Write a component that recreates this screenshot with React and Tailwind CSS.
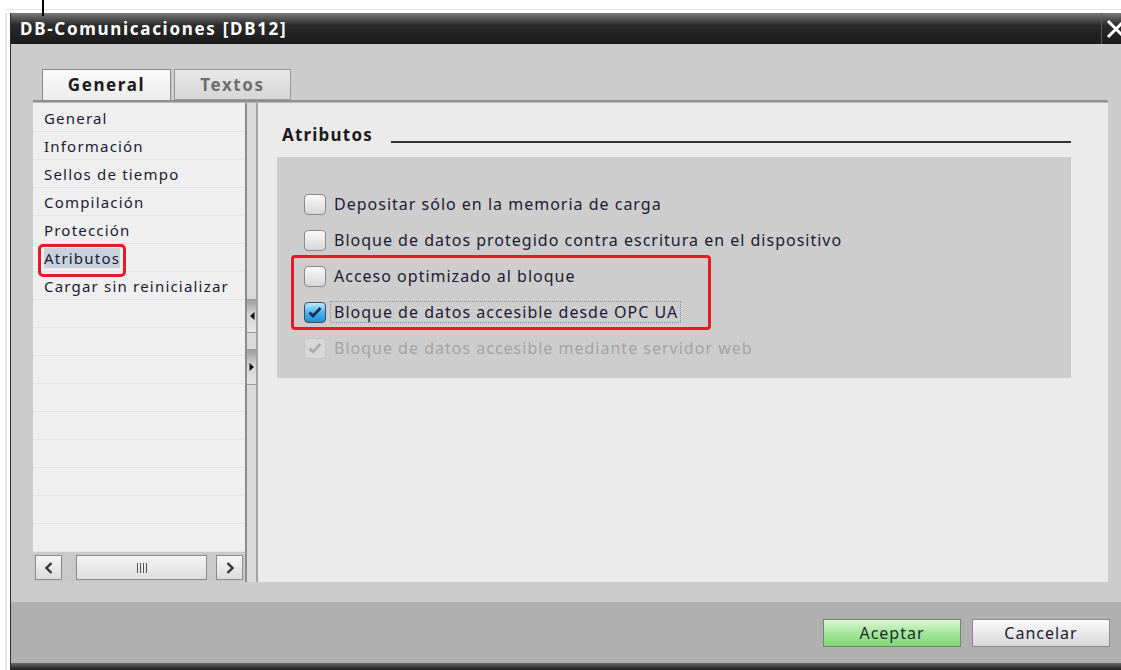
import React from 'react'

const navItems = ['General', 'Información', 'Sellos de tiempo', 'Compilación', 'Protección', 'Atributos', 'Cargar sin reinicializar']

function Box({ checked, disabled }) {
	if (disabled) {
		return (
			<div className="w-[22px] h-[21px] rounded-[4px] border border-[#c4c4c4] bg-[#d8d8d8] flex items-center justify-center">
				<svg width="14" height="12" viewBox="0 0 14 12">
					<path d="M1.5 6.5 L5 10 L12.5 2" fill="none" stroke="#a9a9a9" strokeWidth="2.6" />
				</svg>
			</div>
		)
	}
	if (checked) {
		return (
			<div className="w-[22px] h-[21px] rounded-[4px] border border-[#3c4a5c] bg-linear-to-b from-[#bfe8ff] via-[#46b4ee] to-[#1a8fd8] flex items-center justify-center">
				<svg width="14" height="12" viewBox="0 0 14 12">
					<path d="M1.5 6.5 L5 10 L12.5 2" fill="none" stroke="#1e2a5a" strokeWidth="2.8" />
				</svg>
			</div>
		)
	}
	return <div className="w-[22px] h-[21px] rounded-[4px] border border-[#8a8a8a] bg-linear-to-b from-[#fafafa] to-[#d6d6d6]" />
}

function CheckRow({ label, checked, disabled, focus }) {
	return (
		<div className="h-[36px] flex items-center gap-[8px]">
			<Box checked={checked} disabled={disabled} />
			<span
				className={
					'text-[16px] leading-[20px] tracking-[1px] ' +
					(disabled ? 'text-[#a3a3a3]' : 'text-[#1c1a33]') +
					(focus ? ' -ml-[3px] pl-[3px] pr-[2px] outline outline-1 outline-dotted outline-[#7e8fb0]' : '')
				}
			>
				{label}
			</span>
		</div>
	)
}

function ScrollBtn({ dir }) {
	return (
		<div className="w-[27px] h-[25px] border border-[#8c8c8c] bg-linear-to-b from-[#f6f6f6] to-[#dcdcdc] flex items-center justify-center">
			<svg width="10" height="14" viewBox="0 0 10 14">
				<path d={dir === 'left' ? 'M7.5 2 L2.5 7 L7.5 12' : 'M2.5 2 L7.5 7 L2.5 12'} fill="none" stroke="#333" strokeWidth="2.4" />
			</svg>
		</div>
	)
}

function SplitBtn({ dir, h }) {
	return (
		<div className={`${h} bg-linear-to-b from-[#9c9c9c] via-[#d6d6d6] to-[#e6e6e6] border-b border-[#9a9a9a] flex items-center justify-center`}>
			<svg width="6" height="10" viewBox="0 0 6 10">
				<path d={dir === 'left' ? 'M5.5 1 L1 5 L5.5 9 Z' : 'M0.5 1 L5 5 L0.5 9 Z'} fill="#111" />
			</svg>
		</div>
	)
}

export default function App() {
	return (
		<div className="relative w-[1121px] h-[670px] bg-white overflow-hidden flex flex-col font-['Noto_Sans',sans-serif]">
			{/* sheet grid behind the window */}
			<div className="h-[13px] flex flex-col">
				<div className="h-[9px]" />
				<div className="h-px ml-[5px] bg-[#e2e2e2]" />
			</div>
			<div className="absolute left-[42px] top-0 w-[2px] h-[16px] bg-black" />

			<div className="flex-1 flex">
				<div className="w-[10px] flex">
					<div className="ml-[5px] w-[2px] bg-[#e6e6e6]" />
				</div>

				<div className="w-[1111px] flex flex-col border-l border-[#2e2e2e]">
					{/* title bar */}
					<div className="h-[31px] flex items-center bg-linear-to-b from-[#7a7a7a] via-[#2a2a2a] via-40% to-[#1a1a1a]">
						<span className="pl-[9px] text-white font-bold text-[17px] tracking-[1.7px]">DB-Comunicaciones [DB12]</span>
						<div className="ml-auto h-full w-[20px] border-l border-[#5a5a5a] flex items-center pl-[4px] overflow-hidden">
							<svg width="20" height="20" viewBox="0 0 20 20" className="shrink-0">
								<path d="M2 2 L18 18 M18 2 L2 18" stroke="#fff" strokeWidth="3" />
							</svg>
						</div>
					</div>

					{/* body */}
					<div className="h-[558px] bg-[#cccccc] flex flex-col pt-[25px] pl-[22px]">
						<div className="flex gap-[3px] ml-[9px] h-[31px]">
							<div className="w-[129px] border border-b-0 border-[#8a8a8a] bg-linear-to-b from-[#fbfbfb] to-[#ececec] flex items-center justify-center text-[17px] font-bold tracking-[1.6px] text-[#1a1a1a]">
								General
							</div>
							<div className="w-[117px] border border-[#9a9a9a] bg-linear-to-b from-[#e8e8e8] to-[#d6d6d6] flex items-center justify-center text-[17px] font-bold tracking-[1.6px] text-[#6e6e6e]">
								Textos
							</div>
						</div>

						<div className="w-[1075px] h-[482px] flex flex-col">
							<div className="h-[3px] border-t-2 border-[#8e8e8e] bg-[#b8b8b8] rounded-tr-[2px]" />
							<div className="flex-1 flex">
								{/* left navigation */}
								<div className="w-[212px] flex flex-col bg-[#c9c9c9]">
									<div className="relative flex-1 flex flex-col bg-[#efefef] pt-px">
										{navItems.map((item) => (
											<div key={item} className="h-[28px] shrink-0 border-b border-[#e3e3e3] flex items-center pl-[11px]">
												<span className={'text-[15px] leading-[20px] tracking-[1.2px] text-[#1c1a33] ' + (item === 'Atributos' ? 'bg-[#c8d2dd]' : '')}>
													{item}
												</span>
											</div>
										))}
										{Array.from({ length: 9 }).map((_, i) => (
											<div key={i} className="h-[28px] shrink-0 border-b border-[#e3e3e3]" />
										))}
										<div className="absolute left-[5px] top-[141px] w-[88px] h-[33px] border-[3px] border-[#e31d25] rounded-[5px]" />
									</div>
									<div className="h-[30px] flex items-start pt-[3px] pl-[2px]">
										<ScrollBtn dir="left" />
										<div className="ml-[14px] w-[131px] h-[25px] border border-[#8c8c8c] bg-linear-to-b from-[#f4f4f4] to-[#dddddd] flex items-center justify-center gap-[2px]">
											<div className="w-px h-[10px] bg-[#555]" />
											<div className="w-px h-[10px] bg-[#555]" />
											<div className="w-px h-[10px] bg-[#555]" />
											<div className="w-px h-[10px] bg-[#555]" />
										</div>
										<div className="ml-[9px]"><ScrollBtn dir="right" /></div>
									</div>
								</div>

								{/* splitter */}
								<div className="w-[13px] flex border-l-2 border-[#8c8c8c] border-r-2 border-r-[#a4a4a4] bg-[#dadada]">
									<div className="flex-1 flex flex-col pt-[196px]">
										<SplitBtn dir="left" h="h-[34px]" />
										<div className="h-[16px]" />
										<SplitBtn dir="right" h="h-[36px]" />
									</div>
								</div>

								{/* content */}
								<div className="flex-1 bg-[#ebebeb] flex flex-col pt-[20px] pl-[19px] pr-[37px]">
									<div className="flex items-end pl-[5px] h-[24px]">
										<span className="text-[17px] font-bold tracking-[1.2px] text-[#1a1a1a] leading-[24px]">Atributos</span>
										<div className="flex-1 ml-[18px] mb-[4px] border-b-2 border-[#333]" />
									</div>
									<div className="relative mt-[10px] h-[221px] bg-[#cdcdcd] pt-[11px] pl-[27px]">
										<div className="h-[18px]" />
										<CheckRow label="Depositar sólo en la memoria de carga" />
										<CheckRow label="Bloque de datos protegido contra escritura en el dispositivo" />
										<CheckRow label="Acceso optimizado al bloque" />
										<CheckRow label="Bloque de datos accesible desde OPC UA" checked focus />
										<CheckRow label="Bloque de datos accesible mediante servidor web" disabled />
										<div className="absolute left-[14px] top-[98px] w-[420px] h-[75px] border-[3px] border-[#e31d25] rounded-[4px]" />
									</div>
								</div>
							</div>
						</div>
					</div>

					{/* footer */}
					<div className="h-[61px] bg-[#b0b0b0] flex items-start justify-end pt-[17px] pr-[11px] gap-[11px]">
						<button className="w-[138px] h-[28px] border border-[#6c8c68] bg-linear-to-b from-[#dcf6d6] via-[#a6e69c] to-[#7fd476] text-[16px] tracking-[1px] text-[#1c2a33]">
							Aceptar
						</button>
						<button className="w-[138px] h-[28px] border border-[#8a8a8a] bg-linear-to-b from-[#fbfbfb] to-[#d8d8d8] text-[16px] tracking-[1px] text-[#1c1a33]">
							Cancelar
						</button>
					</div>
					<div className="h-[7px] bg-linear-to-b from-[#6a6a6a] to-[#1e1e1e]" />
				</div>
			</div>
		</div>
	)
}
